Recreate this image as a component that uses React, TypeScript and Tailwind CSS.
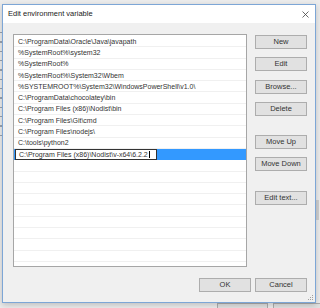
import React from "react";

const rows = [
  "C:\\ProgramData\\Oracle\\Java\\javapath",
  "%SystemRoot%\\system32",
  "%SystemRoot%",
  "%SystemRoot%\\System32\\Wbem",
  "%SYSTEMROOT%\\System32\\WindowsPowerShell\\v1.0\\",
  "C:\\ProgramData\\chocolatey\\bin",
  "C:\\Program Files (x86)\\Nodist\\bin",
  "C:\\Program Files\\Git\\cmd",
  "C:\\Program Files\\nodejs\\",
  "C:\\tools\\python2",
];

const editValue = "C:\\Program Files (x86)\\Nodist\\v-x64\\6.2.2";

function Btn({ label, className = "" }: { label: string; className?: string }) {
  return (
    <div
      className={
        "h-[14px] w-[52px] flex items-center justify-center bg-[#e1e1e1] border border-[#adadad] text-[7.5px] text-[#333] leading-none " +
        className
      }
    >
      {label}
    </div>
  );
}

export default function App() {
  const empties = Array.from({ length: 10 });
  return (
    <div className="relative w-[320px] h-[308px] bg-[#ececec] overflow-hidden font-['Liberation_Sans',Arial,sans-serif]">
      {/* background window bits */}
      <div className="absolute left-[217px] top-[303px] w-[51px] h-[14px] bg-[#e1e1e1] border border-[#adadad]" />
      <div className="absolute left-[273px] top-[303px] w-[52px] h-[14px] bg-[#e1e1e1] border border-[#adadad]" />
      <div className="absolute left-0 top-[26px] w-[2px] h-[110px] flex flex-col gap-[8px] pt-[6px]">
        {Array.from({ length: 12 }).map((_, i) => (
          <div key={i} className="w-[2px] h-[3px] bg-[#9aa3ae]" />
        ))}
      </div>
      <div className="absolute left-[316px] top-[200px] w-[3px] h-[20px] bg-[#cfcfcf]" />

      {/* dialog */}
      <div className="absolute left-[2px] top-[4px] w-[314px] h-[299px] border border-[#7da6d6] bg-[#f0f0f0] flex flex-col shadow-[0_2px_6px_rgba(0,0,0,0.2)]">
        <div className="h-[18px] bg-white flex items-center justify-between pl-[5px] pr-[6px]">
          <span className="text-[7.5px] text-[#222] leading-none">Edit environment variable</span>
          <svg width="7" height="7" viewBox="0 0 7 7">
            <path d="M0.5 0.5 L6.5 6.5 M6.5 0.5 L0.5 6.5" stroke="#444" strokeWidth="0.8" fill="none" />
          </svg>
        </div>
        <div className="flex-1 flex flex-col pt-[11px] pl-[10px] pr-[8px]">
          <div className="flex gap-[8px]">
            <div className="w-[234px] h-[233px] bg-white border border-[#a6a6a6] pt-[1px] overflow-hidden">
              {rows.map((r) => (
                <div
                  key={r}
                  className="h-[11.3px] border-b border-[#f0f0f0] pl-[4px] flex items-center text-[7px] text-[#333] leading-none whitespace-nowrap"
                >
                  {r}
                </div>
              ))}
              <div className="h-[11.3px] flex items-stretch bg-[#3399ff]">
                <div className="w-[142px] ml-[1px] bg-white border border-[#333] pl-[3px] flex items-center text-[7px] text-[#333] leading-none whitespace-nowrap">
                  {editValue}
                  <span className="inline-block w-px h-[7px] bg-black ml-[1px]" />
                </div>
              </div>
              {empties.map((_, i) => (
                <div key={i} className="h-[11.3px] border-b border-[#f0f0f0]" />
              ))}
            </div>
            <div className="flex flex-col pt-[1px]">
              <Btn label="New" />
              <Btn label="Edit" className="mt-[8px]" />
              <Btn label="Browse..." className="mt-[9px]" />
              <Btn label="Delete" className="mt-[8px]" />
              <Btn label="Move Up" className="mt-[19px]" />
              <Btn label="Move Down" className="mt-[8px]" />
              <Btn label="Edit text..." className="mt-[20px]" />
            </div>
          </div>
          <div className="flex justify-end gap-[4px] mt-[11px]">
            <Btn label="OK" className="border-[#0078d7]" />
            <Btn label="Cancel" />
          </div>
        </div>
        <svg className="absolute right-[1px] bottom-[1px]" width="6" height="6" viewBox="0 0 6 6">
          <rect x="4" y="0" width="1" height="1" fill="#a0a0a0" />
          <rect x="2" y="2" width="1" height="1" fill="#a0a0a0" />
          <rect x="4" y="2" width="1" height="1" fill="#a0a0a0" />
          <rect x="0" y="4" width="1" height="1" fill="#a0a0a0" />
          <rect x="2" y="4" width="1" height="1" fill="#a0a0a0" />
          <rect x="4" y="4" width="1" height="1" fill="#a0a0a0" />
        </svg>
      </div>
    </div>
  );
}
